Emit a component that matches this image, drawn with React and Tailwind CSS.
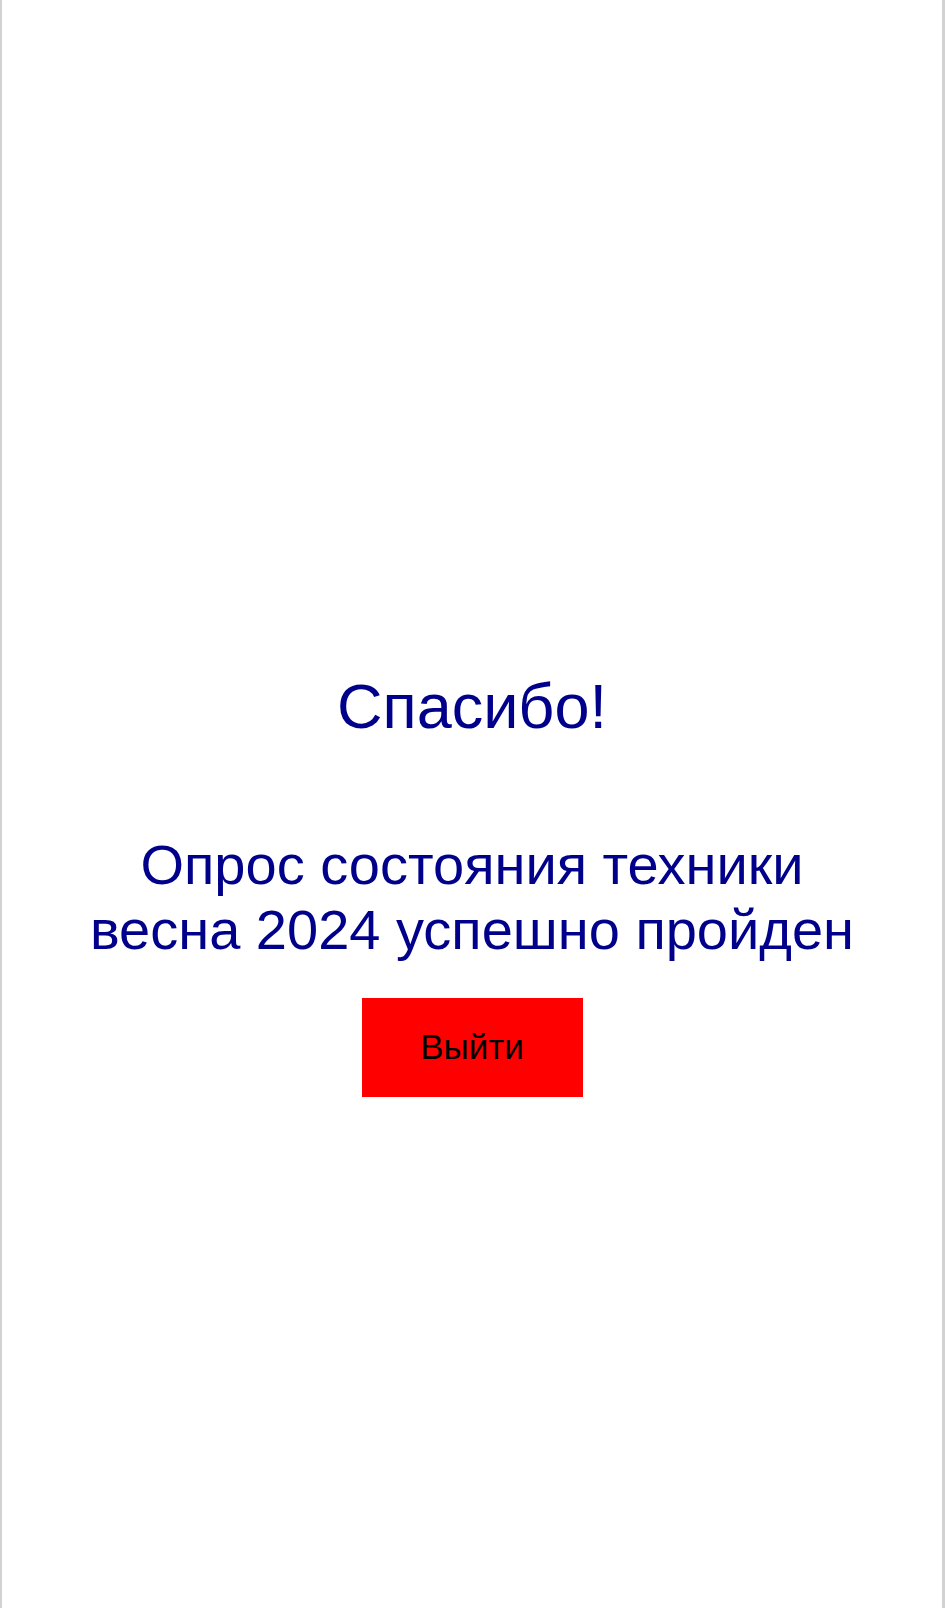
import React from 'react';

const App = () => {
  const handleExit = () => {
  };

  return (
    <div
      className="min-h-[1608px] w-full bg-white border-l-2 border-r-[3px] border-[#d2d2d2] flex flex-col items-center pt-[670px]"
      style={{ fontFamily: '"Liberation Sans", Arial, sans-serif' }}
    >
      <h1 className="text-[63px] leading-[72px] text-[#00008b] text-center">Спасибо!</h1>

      <p className="mt-[90px] text-[56px] leading-[65px] text-[#00008b] text-center">
        Опрос состояния техники
        <br />
        весна 2024 успешно пройден
      </p>

      <button
        onClick={handleExit}
        className="mt-[36px] w-[221px] h-[99px] bg-[#ff0000] text-black text-[35px] flex items-center justify-center"
      >
        Выйти
      </button>
    </div>
  );
};

export default App;
